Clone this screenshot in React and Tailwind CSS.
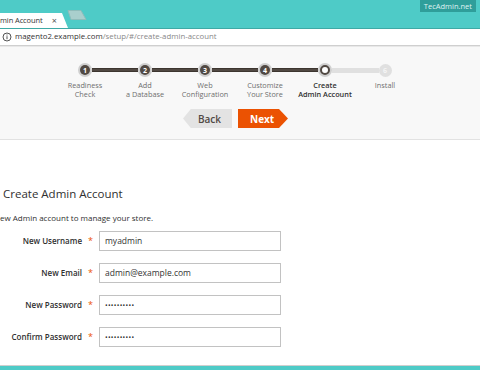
import React from "react";

const steps = [
  { n: "1", l1: "Readiness", l2: "Check", state: "done" },
  { n: "2", l1: "Add", l2: "a Database", state: "done" },
  { n: "3", l1: "Web", l2: "Configuration", state: "done" },
  { n: "4", l1: "Customize", l2: "Your Store", state: "done" },
  { n: "5", l1: "Create", l2: "Admin Account", state: "active" },
  { n: "6", l1: "Install", l2: "", state: "todo" },
];

function Bar({ kind }) {
  if (kind === "none") return <div className="flex-1" />;
  if (kind === "dark")
    return <div className="flex-1 h-[4px] bg-[#514943] border-y border-[#3d3630]" />;
  return <div className="flex-1 h-[5px] bg-[#e0e0e0]" />;
}

function Circle({ step }) {
  if (step.state === "done")
    return (
      <div className="w-[14px] h-[14px] rounded-full bg-[#cfcfcf] flex items-center justify-center">
        <div className="w-[10px] h-[10px] rounded-full bg-[#514943] text-white text-[7px] font-bold leading-none flex items-center justify-center">
          {step.n}
        </div>
      </div>
    );
  if (step.state === "active")
    return (
      <div className="w-[14px] h-[14px] rounded-full bg-[#cfcfcf] flex items-center justify-center">
        <div className="w-[10px] h-[10px] rounded-full bg-white border-[2.5px] border-[#514943]" />
      </div>
    );
  return (
    <div className="w-[13px] h-[13px] rounded-full bg-[#e0e0e0] text-[#f5f5f5] text-[7px] font-bold leading-none flex items-center justify-center">
      {step.n}
    </div>
  );
}

function Row({ label, value, small }) {
  return (
    <div className="flex items-center h-[20px]">
      <div className="w-[82px] text-right text-[8px] font-semibold text-[#303030] whitespace-nowrap">
        {label}
      </div>
      <div className="w-[17px] pl-[6px] text-[9px] text-[#eb5202]">*</div>
      <div className="w-[182px] h-[20px] border border-[#c2c2c2] bg-white flex items-center pl-[5px]">
        <span
          className={
            small
              ? "text-[7px] tracking-[0.3px] text-[#333] leading-none"
              : "text-[8.5px] text-[#333]"
          }
        >
          {value}
        </span>
      </div>
    </div>
  );
}

export default function App() {
  return (
    <div
      className="w-[480px] h-[370px] overflow-hidden relative bg-white flex flex-col"
      style={{ fontFamily: '"Open Sans", "Noto Sans", sans-serif' }}
    >
      {/* Browser tab strip */}
      <div className="h-[28px] bg-[#4ecbc7] flex items-end shrink-0">
        <div className="flex items-end h-[15px]">
          <div className="w-[62px] h-[15px] bg-white flex items-center justify-between pr-[5px]">
            <span className="text-[7.5px] tracking-[-0.1px] text-[#333] leading-none">min Account</span>
            <span className="text-[9px] text-[#555] leading-none">×</span>
          </div>
          <svg width="6" height="15" viewBox="0 0 6 15" className="block">
            <polygon points="0,0 6,15 0,15" fill="#ffffff" />
          </svg>
        </div>
        <svg width="20" height="14" viewBox="0 0 20 14" className="block mb-[4px] -ml-[1px]">
          <polygon points="1,0.5 14,0.5 19,9.5 4,9.5" fill="#a9cfcd" stroke="#8fbdbb" strokeWidth="1" />
        </svg>
      </div>
      <div className="absolute top-0 right-[4px] h-[12px] px-[4px] bg-[#2f9e9a] text-[#dff3f2] text-[7.5px] leading-[12px]">
        TecAdmin.net
      </div>

      {/* Address bar */}
      <div className="h-[18px] shrink-0 bg-white border-t border-[#3ea9a5] border-b border-b-[#cfcfcf] flex items-center pl-[2px]">
        <svg width="10" height="10" viewBox="0 0 10 10" className="block mr-[3px]">
          <circle cx="5" cy="5" r="4" fill="none" stroke="#555" strokeWidth="1" />
          <rect x="4.5" y="4.2" width="1" height="3" fill="#555" />
          <rect x="4.5" y="2.5" width="1" height="1" fill="#555" />
        </svg>
        <span className="text-[7.8px] leading-none text-[#333]">magento2.example.com</span>
        <span className="text-[7.8px] leading-none text-[#888]">/setup/#/create-admin-account</span>
      </div>

      {/* Progress area */}
      <div className="h-[94px] shrink-0 bg-[#f8f8f8] border-t border-[#e8e8e8] border-b border-b-[#e2e2e2] pt-[16px]">
        <div className="flex pl-[55px]">
          {steps.map((s, i) => (
            <div key={s.n} className="w-[60px] flex flex-col items-center">
              <div className="w-full h-[14px] flex items-center">
                <Bar kind={i === 0 ? "none" : i <= 4 ? "dark" : "light"} />
                <Circle step={s} />
                <Bar kind={i === 5 ? "none" : i <= 3 ? "dark" : "light"} />
              </div>
              <div
                className={
                  "mt-[4px] text-[7.3px] leading-[9px] text-center whitespace-nowrap " +
                  (s.state === "active" ? "text-[#303030] font-semibold" : "text-[#6e6e6e]")
                }
              >
                <div>{s.l1}</div>
                <div>{s.l2}</div>
              </div>
            </div>
          ))}
        </div>
        <div className="flex pl-[183px] mt-[10px] gap-[6px]">
          <div className="w-[49px] h-[19px] bg-[#e3e3e3] [clip-path:polygon(16%_0,100%_0,100%_100%,16%_100%,0_50%)] flex items-center justify-end pr-[11px]">
            <span className="text-[10px] font-semibold text-[#514943] leading-none">Back</span>
          </div>
          <div className="w-[50px] h-[19px] bg-[#eb5202] [clip-path:polygon(0_0,82%_0,100%_50%,82%_100%,0_100%)] flex items-center pl-[12px]">
            <span className="text-[10px] font-bold text-white leading-none">Next</span>
          </div>
        </div>
      </div>

      {/* Content */}
      <div className="flex-1 bg-white pt-[46px] overflow-hidden">
        <div className="text-[11.5px] leading-[16px] text-[#303030] pl-[3px]">Create Admin Account</div>
        <div className="mt-[10px] text-[8px] leading-[12px] text-[#303030] -ml-[6px] whitespace-nowrap">
          New Admin account to manage your store.
        </div>
        <div className="mt-[7px] flex flex-col gap-[12px]">
          <Row label="New Username" value="myadmin" />
          <Row label="New Email" value="admin@example.com" />
          <Row label="New Password" value="••••••••••" small />
          <Row label="Confirm Password" value="••••••••••" small />
        </div>
      </div>

      {/* Bottom bar */}
      <div className="h-[5px] shrink-0 bg-[#4ecbc7] border-t border-[#cfcfcf]" />
    </div>
  );
}
